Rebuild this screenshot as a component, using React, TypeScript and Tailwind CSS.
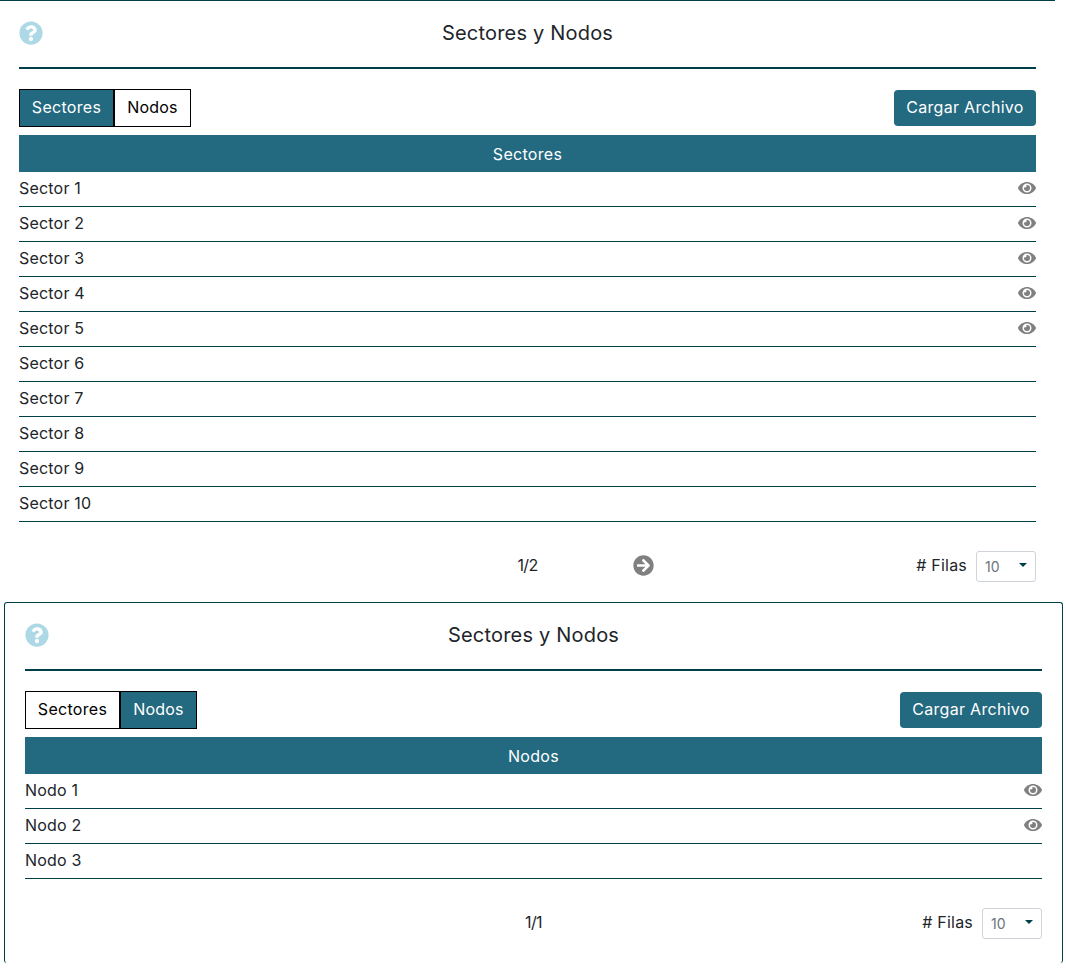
import { FaArrowCircleRight, FaEye, FaQuestionCircle } from "react-icons/fa";

type Tab = "Sectores" | "Nodos";

interface PanelProps {
  active: Tab;
  rows: string[];
  viewable: number;
  page: string;
  hasNext?: boolean;
}

function TabButton({ label, active }: { label: Tab; active: boolean }) {
  return (
    <button
      className={`h-[38px] border border-black pb-0.5 ${label === "Sectores" ? "w-[95px] tracking-[0.3px]" : "w-[77px] tracking-[0.2px]"} ${
        active ? "bg-[#236980] text-white" : "bg-white text-black"
      }`}
    >
      {label}
    </button>
  );
}

function Panel({ active, rows, viewable, page, hasNext = false }: PanelProps) {
  return (
    <div className="w-[1017px]">
      <header className="grid h-[68px] grid-cols-[24px_1fr_24px] items-center border-b-2 border-[#003f47]">
        <FaQuestionCircle className="mb-0.5 size-6 text-[#add8e6]" />
        <h1 className="pb-[3px] text-center text-[20px] leading-6 tracking-[0.2px]">Sectores y Nodos</h1>
      </header>

      <div className="flex h-[66px] items-start justify-between pt-5">
        <div className="flex">
          <TabButton label="Sectores" active={active === "Sectores"} />
          <TabButton label="Nodos" active={active === "Nodos"} />
        </div>
        <button className="mt-px h-9 w-[142px] rounded-[4px] bg-[#236980] pb-0.5 tracking-[0.3px] text-white">
          Cargar Archivo
        </button>
      </div>

      <div className="flex h-[37px] items-center justify-center bg-[#236980] pt-px tracking-[0.3px] text-white">
        {active}
      </div>
      <ul>
        {rows.map((row, i) => (
          <li key={row} className="flex h-[35px] items-center justify-between border-b border-[#003f47] pb-0.5 tracking-[0.2px]">
            {row}
            {i < viewable && <FaEye className="h-4 w-[18px] text-[#808080]" />}
          </li>
        ))}
      </ul>

      <footer className="mt-[29px] grid h-[31px] grid-cols-[498px_21px_1fr] items-center">
        <span className="col-start-2 pb-1 text-center tracking-[-0.6px]">{page}</span>
        <div className="flex items-center justify-between pl-[95px]">
          <span className="flex size-[22px] items-center pb-0.5">
            {hasNext && <FaArrowCircleRight className="size-[21px] shrink-0 text-[#808080]" />}
          </span>
          <div className="flex items-center gap-[9px]">
            <span className="pb-1 tracking-[0.2px]"># Filas</span>
            <button className="flex h-[31px] w-[60px] items-center justify-between rounded-[3px] border border-[#ced4da] pr-2 pl-2 text-[14px] text-[#6c757d]">
              10
              <svg className="mb-1 h-1 w-2" viewBox="0 0 8 4">
                <path d="M0 0h8L4 4z" fill="#003f47" />
              </svg>
            </button>
          </div>
        </div>
      </footer>
    </div>
  );
}

const sectors = Array.from({ length: 10 }, (_, i) => `Sector ${i + 1}`);
const nodes = ["Nodo 1", "Nodo 2", "Nodo 3"];

export default function App() {
  return (
    <div className="h-[970px] w-[1066px] overflow-hidden bg-white font-['Inter','Open_Sans',sans-serif] text-[16px] leading-6 font-normal text-[#212529]">
      <section className="h-[602px] w-[1055px] border-t border-[#003f47] pl-[19px]">
        <Panel active="Sectores" rows={sectors} viewable={5} page="1/2" hasNext />
      </section>
      <section className="ml-1 h-[361px] w-[1059px] rounded-[3px] border border-b-0 border-[#003f47] pl-5">
        <Panel active="Nodos" rows={nodes} viewable={2} page="1/1" />
      </section>
    </div>
  );
}
